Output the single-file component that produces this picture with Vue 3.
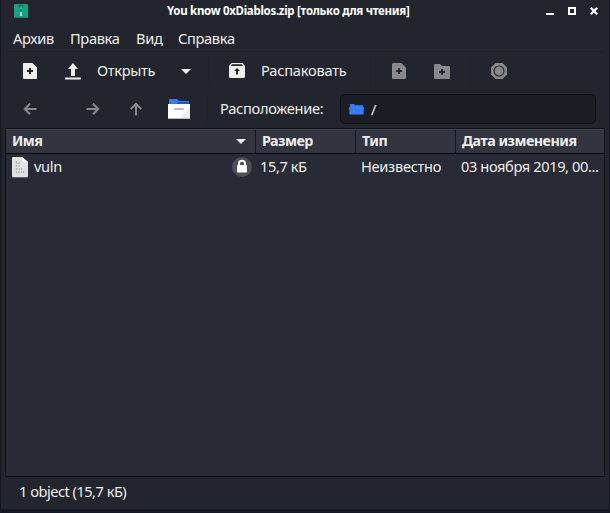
<script setup>
const menus = [
  { text: 'Архив', width: 57 },
  { text: 'Правка', width: 66 },
  { text: 'Вид', width: 42 },
  { text: 'Справка', width: 70 },
]
const columns = [
  { text: 'Имя', cls: 'name', sorted: true },
  { text: 'Размер', cls: 'size' },
  { text: 'Тип', cls: 'type' },
  { text: 'Дата изменения', cls: 'date' },
]
</script>

<template>
  <div class="window">
    <header class="titlebar">
      <svg class="app-icon" width="14" height="15" viewBox="0 0 14 15">
        <rect width="14" height="14" rx="1" fill="#16a085" />
        <path d="M0 13h14v1H0z" fill="#128069" />
        <path d="M4 1h6L8 4H6z" fill="#0c6956" />
        <path d="M6.5 2h1v3h-1z" fill="#70c9b6" />
        <path d="M6 5h2v2H6z" fill="#0d7761" />
        <path d="M6 8h2v4H6z" fill="#a9ddd1" />
      </svg>
      <span class="title">You know 0xDiablos.zip [только для чтения]</span>
      <svg class="controls" width="54" height="10" viewBox="0 0 54 10">
        <path d="M1 7h8v2H1z" fill="#fff" />
        <path d="M24 2h6v6h-6z" fill="none" stroke="#fff" stroke-width="2" />
        <path d="M45.8 1.8l6.4 6.4M52.2 1.8l-6.4 6.4" stroke="#fff" stroke-width="2.3" />
      </svg>
    </header>
    <nav class="menubar">
      <span v-for="m in menus" :key="m.text" :style="{ width: m.width + 'px' }">{{ m.text }}</span>
    </nav>
    <div class="toolbar">
      <svg class="new" width="14" height="16" viewBox="0 0 14 16">
        <path fill-rule="evenodd" fill="#eeeeec" d="M1 0h8.5L14 4.5V15q0 1-1 1H1q-1 0-1-1V1Q0 0 1 0zM6 5v2H4v2h2v2h2V9h2V7H8V5z" />
      </svg>
      <svg class="open" width="16" height="17" viewBox="0 0 16 17">
        <path fill="#eeeeec" d="M8 0l5 6h-3v7H6V6H3zM0 14.500h16v2H0z" />
      </svg>
      <span class="open-label">Открыть</span>
      <svg class="drop" width="10" height="5" viewBox="0 0 10 5"><path d="M0 0h10L5 5z" fill="#eeeeec" /></svg>
      <i class="sep sep-a"></i>
      <svg class="extract" width="16" height="15" viewBox="0 0 16 15">
        <path fill-rule="evenodd" fill="#eeeeec" d="M2.5 0h11L16 3v10.500q0 1.500-1.500 1.500h-13Q0 15 0 13.500V3zM3 1.300L2 3h12l-1-1.700zM8 5L5 8h2v3.500h2V8h2z" />
      </svg>
      <span class="extract-label">Распаковать</span>
      <i class="sep sep-b"></i>
      <svg class="add-file" width="14" height="16" viewBox="0 0 14 16">
        <path fill-rule="evenodd" fill="#89898b" d="M1 0h8.500L14 4.500V15q0 1-1 1H1q-1 0-1-1V1Q0 0 1 0zM6 5v2H4v2h2v2h2V9h2V7H8V5z" />
      </svg>
      <svg class="add-folder" width="16" height="15" viewBox="0 0 16 15">
        <path fill-rule="evenodd" fill="#89898b" d="M1 0h5l2 2h7q1 0 1 1v11q0 1-1 1H1q-1 0-1-1V1Q0 0 1 0zM7 5v2H5v2h2v2h2V9h2V7H9V5z" />
      </svg>
      <i class="sep sep-c"></i>
      <svg class="stop" width="16" height="16" viewBox="0 0 16 16">
        <path fill="#89898b" d="M4.500 0h7L16 4.500v7L11.500 16h-7L0 11.500v-7z" />
        <circle cx="8" cy="8" r="5" fill="none" stroke="#292a31" stroke-width="1.200" />
      </svg>
    </div>
    <div class="locationbar">
      <svg class="back" width="14" height="12" viewBox="0 0 14 12"><path class="arrow" d="M13.500 6H2M7 .8L1.800 6 7 11.200" /></svg>
      <svg class="forward" width="14" height="12" viewBox="0 0 14 12"><path class="arrow" d="M.5 6H12M7 .8L12.200 6 7 11.200" /></svg>
      <svg class="up" width="12" height="14" viewBox="0 0 12 14"><path class="arrow" d="M6 13.500V2M.8 7L6 1.800 11.200 7" /></svg>
      <svg class="home" width="22" height="20" viewBox="0 0 22 20">
        <path d="M1 1q0-1 1-1h7l2 2h10v4H1z" fill="#367bf0" />
        <path d="M10 3h11v2H9z" fill="#2454b5" />
        <path d="M0 5h22v14.500H0z" fill="#fff" />
        <path d="M22 8v11.500H11z" fill="#ededed" />
        <rect x="6" y="9" width="10" height="2" rx="1" fill="#bcbcbc" />
        <path d="M0 19h22v1H0z" fill="#bcbcbd" />
      </svg>
      <i class="sep sep-d"></i>
      <span class="location-label">Расположение:</span>
      <div class="path-entry">
        <svg width="15" height="11" viewBox="0 0 15 11">
          <path d="M1 .5Q1 0 1.500 0H5l1 1h7.500q.5 0 .5.500V3h1l-.5 7.500H.5L0 3h1z" fill="#367bf0" />
          <path d="M5.500 1H14v1H5z" fill="#2d64c3" />
          <path d="M.5 10h14v.7H.5z" fill="#2456b0" />
        </svg>
        <span>/</span>
      </div>
    </div>
    <main class="list">
      <div class="head">
        <div v-for="c in columns" :key="c.text" class="cell" :class="c.cls">
          <span>{{ c.text }}</span>
          <svg v-if="c.sorted" width="10" height="5" viewBox="0 0 10 5"><path d="M0 0h10L5 5z" fill="#eeeeec" /></svg>
        </div>
      </div>
      <div class="row">
        <svg class="file" width="16" height="21" viewBox="0 0 16 21">
          <path d="M1 0h9l6 5v14q0 1-1 1H1q-1 0-1-1V1Q0 0 1 0z" fill="#e2e2e1" />
          <path d="M10 0l6 5h-4q-2 0-2-2z" fill="#fff" />
          <path d="M0 20h16v.7H0z" fill="#777" />
          <path d="M4.500 4v3M7 5v2M4.500 8v2M7 8v2M4.500 11v2M7 11v2M9.500 11v2M4.500 14v2M7 14v2M9.500 14v2M11.500 14v2" stroke="#b4b4b4" stroke-width="1.300" />
        </svg>
        <span class="filename">vuln</span>
        <svg class="lock" width="20" height="20" viewBox="0 0 20 20">
          <circle cx="10" cy="10" r="10" fill="#4c4e58" />
          <path d="M7 9V6.800a3 3 0 0 1 6 0V9" fill="none" stroke="#fff" stroke-width="2" />
          <rect x="5" y="8" width="10" height="7.500" rx="1" fill="#fff" />
        </svg>
        <span class="filesize">15,7 кБ</span>
        <span class="filetype">Неизвестно</span>
        <span class="filedate">03 ноября 2019, 00...</span>
      </div>
    </main>
    <footer class="status"><span>1 object (15,7 кБ)</span></footer>
  </div>
</template>

<style>
body { margin: 0; background: #141824; }
</style>

<style scoped>
* { box-sizing: border-box; }
.window {
  width: 610px; height: 513px; display: flex; flex-direction: column;
  background: #23252e; color: #eeeeec; overflow: hidden;
  border-left: 1px solid #15171e; border-right: 1px solid #12151f; border-bottom: 4px solid #141824;
  font: 14.6px/20px "Noto Sans", sans-serif; letter-spacing: -.33px; white-space: nowrap;
}
svg, span, i { flex: none; display: block; }
.titlebar { height: 24px; flex: none; display: flex; align-items: flex-start; padding-left: 13px; }
.app-icon { margin-top: 4px; }
.title { width: 243px; margin: 1px 0 0 139px; font-size: 11.500px; font-weight: 700; letter-spacing: -.3px; color: #fff; }
.controls { margin: 6px 0 0 135px; }
.menubar { height: 28px; flex: none; display: flex; margin: 0 5px; padding: 4px 0 0 7px; border-bottom: 1px solid #1f2129; }
.toolbar { height: 38px; flex: none; display: flex; align-items: flex-start; padding: 3px 0 0 22px; }
.toolbar svg { margin-top: 8px; }
.toolbar span { margin-top: 5px; }
.toolbar .open { margin-left: 28px; }
.open-label { width: 59px; margin-left: 16px; }
.toolbar .drop { margin: 14px 0 0 25px; }
.sep { width: 1px; height: 30px; background: #20222a; }
.sep-a { margin-left: 17px; }
.toolbar .extract { margin-left: 20px; }
.extract-label { width: 87px; margin-left: 16px; letter-spacing: -.2px; }
.sep-b { margin-left: 22px; }
.toolbar .add-file { margin-left: 21px; }
.toolbar .add-folder { margin: 9px 0 0 28px; }
.sep-c { margin-left: 20px; }
.toolbar .stop { margin-left: 20px; }
.locationbar { height: 38px; flex: none; display: flex; align-items: flex-start; padding: 4px 0 0 22px; }
.arrow { fill: none; stroke: #88898c; stroke-width: 2; }
.back, .forward { margin-top: 9px; }
.forward { margin-left: 49px; }
.up { margin: 8px 0 0 30px; }
.home { margin: 5px 0 0 26px; }
.sep-d { margin-left: 17px; }
.location-label { width: 107px; margin: 4px 0 0 12px; letter-spacing: -.28px; }
.path-entry {
  width: 256px; height: 30px; margin-left: 13px; display: flex; align-items: center; padding-left: 8px;
  background: #1b1d24; border: 1px solid #101218; border-radius: 5px;
}
.path-entry span { margin-left: 7px; }
.list { height: 349px; flex: none; margin: 0 4px; padding-top: 1px; border: 1px solid #101218; background: #282a36; }
.head { height: 24px; display: flex; background: #323540; box-shadow: 0 -1px #41444f; border-bottom: 1px solid #050609; font-size: 14.300px; font-weight: 700; letter-spacing: -.5px; }
.cell { height: 23px; display: flex; align-items: center; justify-content: space-between; padding: 0 9px 0 6px; border-right: 1px solid #14161c; }
.cell span { margin-top: -2px; }
.name { width: 250px; }
.size { width: 100px; }
.type { width: 100px; }
.date { flex: 1; border-right: 0; }
.row { height: 26px; display: flex; align-items: flex-start; padding: 3px 0 0 6px; }
.row span { margin-top: -1px; }
.filename { width: 198px; margin-left: 6px; }
.filesize { width: 101px; margin-left: 8px; letter-spacing: -.4px; }
.filetype { width: 100px; letter-spacing: -.28px; }
.filedate { letter-spacing: -.38px; }
.status { height: 32px; display: flex; padding: 4px 0 0 18px; letter-spacing: -.5px; }
</style>
